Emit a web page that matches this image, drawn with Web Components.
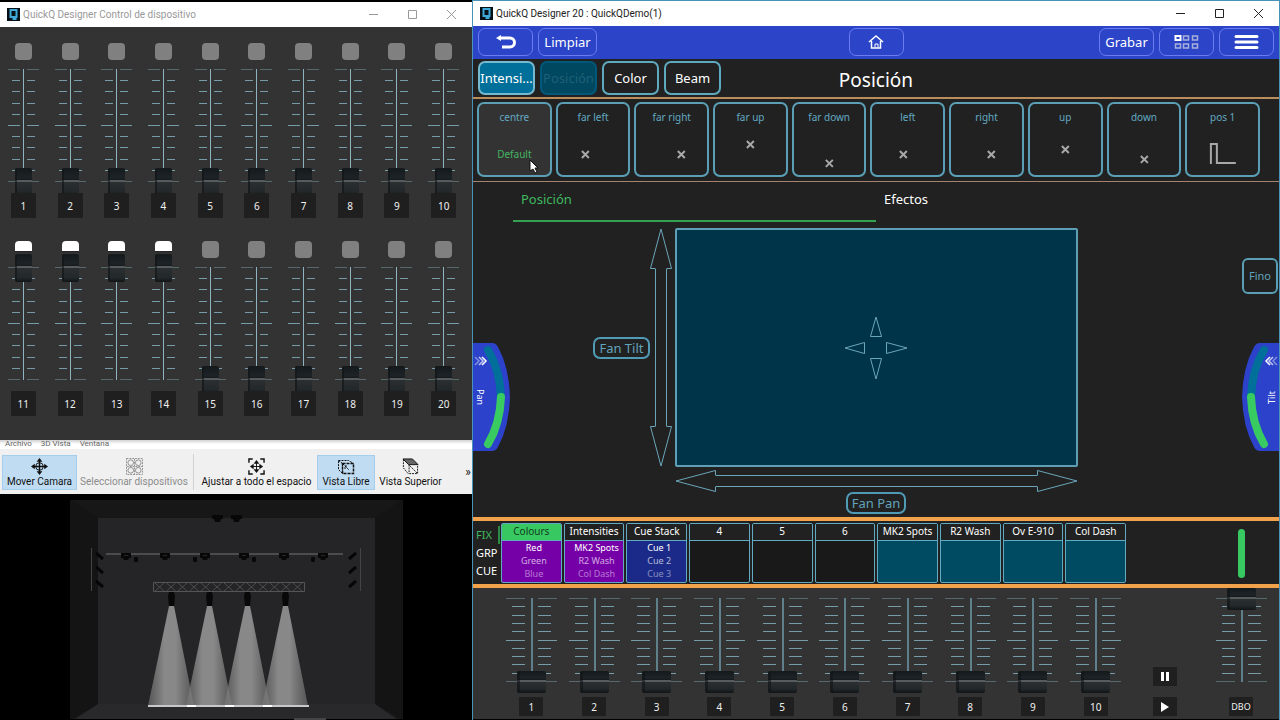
<!DOCTYPE html>
<html lang="es">
<head>
<meta charset="utf-8">
<meta name="viewport" content="width=device-width, initial-scale=1">
<title>QuickQ Designer 20</title>
<style>
  html, body { margin: 0; background: #000; }
  body { font-family: "Noto Sans", "Open Sans", sans-serif; color: #fff; }
</style>
</head>
<body>
<quick-desktop></quick-desktop>

<script>
const BASE = `
  *, *::before, *::after { box-sizing: border-box; }
  button { font: inherit; color: inherit; margin: 0; padding: 0; border: 0; background: none; cursor: pointer; }
  svg { display: block; }
`;

function define(name, render) {
  customElements.define(name, class extends HTMLElement {
    constructor() {
      super();
      this.attachShadow({ mode: "open" });
    }
    connectedCallback() {
      const { css, html } = render(this);
      this.shadowRoot.innerHTML = `<style>${BASE}${css}</style>${html}`;
    }
  });
}

/* Title bar of a desktop window: logo, title text, window buttons */
define("window-title", () => ({
  css: `
    :host { display: flex; align-items: center; height: 25px; padding: 0 1px 0 7px; gap: 3px; background: #fff;
            color: var(--title-color, #222); font: 10px/24px Roboto, sans-serif; flex: none; }
    h1 { flex: 1; margin: 0; font: inherit; white-space: nowrap; }
    .buttons { display: flex; }
    .buttons button { width: 39px; height: 24px; display: grid; place-items: center; }
    .buttons svg { fill: none; stroke: currentColor; }
  `,
  html: `
    <svg width="13" height="13" viewBox="0 0 13 13" aria-hidden="true">
      <rect width="13" height="13" fill="#061018"/>
      <path d="M3.500 2h6v7h-6z M6.500 9v2h3" fill="none" stroke="#3fa9d8" stroke-width="2"/>
    </svg>
    <h1><slot></slot></h1>
    <div class="buttons">
      <button aria-label="Minimizar"><svg width="11" height="11"><path d="M1 5.500h9"/></svg></button>
      <button aria-label="Maximizar"><svg width="11" height="11"><path d="M1.500 1.500h8v8h-8z"/></svg></button>
      <button aria-label="Cerrar"><svg width="11" height="11"><path d="M1 1l9 9M10 1l-9 9"/></svg></button>
    </div>
  `
}));

/* Vertical fader with its scale and number plate */
let faderId = 0;
define("fader-strip", el => {
  const wide = el.hasAttribute("wide");
  const g = wide
    ? { w: 51, h: 84, major: 19, inset: 6, line: 2, tw: 29, th: 22, grip: 10 }
    : { w: 31, h: 113, major: 12, inset: 4, line: 1, tw: 17, th: 28, grip: 13 };
  const ticks = Array.from({ length: 11 }, (_, i) => {
    const y = Math.round(i * (g.h - 1) / 10);
    const main = i % 5 === 0;
    const x = main ? 0 : g.inset;
    const len = g.major - x;
    const fill = i % 10 === 0 ? "#56696f" : "#769ca8";
    return `<path fill="${fill}" d="M${x} ${y}h${len}v1h-${len}z M${g.w - g.major} ${y}h${len}v1h-${len}z"/>`;
  }).join("");
  const id = "f" + (++faderId);
  const led = el.getAttribute("led");
  const label = el.getAttribute("label");
  return {
    css: `
      :host { display: flex; flex-direction: column; align-items: center; }
      .led { width: 17px; height: 17px; border-radius: 4px; background: #808080; margin-bottom: 9px; }
      .led.on { background: linear-gradient(#fff 10px, #222 10px, #333 12px); }
      .track { position: relative; width: ${g.w}px; height: ${g.h}px; }
      .track svg { width: 100%; height: 100%; shape-rendering: crispEdges; }
      input { appearance: none; -webkit-appearance: none; writing-mode: vertical-lr; direction: rtl;
        position: absolute; top: -${g.grip}px; left: 0; right: 0; margin: 0 auto; padding: 0;
        width: ${g.tw}px; height: ${g.h + g.th - 1}px; background: none; }
      input::-webkit-slider-runnable-track { width: ${g.tw}px; height: 100%; background: none; }
      input::-webkit-slider-thumb { appearance: none; -webkit-appearance: none;
        width: ${g.tw}px; height: ${g.th}px; border: 0; border-radius: 2px;
        border-left: ${wide ? 3 : 2}px solid rgba(16,20,22,.6);
        background: linear-gradient(#14191c 0, #1d2327 ${g.grip - 3}px, #14191c ${g.grip - 1}px, #565b5e ${g.grip - 1}px, #565b5e ${g.grip + 1}px, #2b2f32 ${g.grip + 1}px, #22272a ${g.th - 4}px, #101416 100%); }
      label { position: relative; display: grid; place-items: center; background: #1f1f1f; border-radius: 1px;
        width: ${wide ? 24 : 25}px; height: ${wide ? 19 : 25}px; margin-top: ${wide ? 15 : 11}px;
        font-size: ${label.length > 2 ? 9 : 10}px; line-height: 14px; color: #f0f0f0; }
    `,
    html: `
      ${led ? `<button class="led ${led}" aria-label="Flash ${label}"></button>` : ""}
      <div class="track">
        <svg viewBox="0 0 ${g.w} ${g.h}" aria-hidden="true">${ticks}
          <rect x="${(g.w - 1) / 2}" y="0" width="${g.line}" height="${g.h}" fill="${wide ? "#5f7f8a" : "#8fb4bf"}"/></svg>
        <input type="range" id="${id}" min="0" max="100" value="${el.getAttribute("value") || 0}">
      </div>
      <label for="${id}">${label}</label>
    `
  };
});

/* Fixture control surface: two banks of ten faders */
define("device-mixer", () => {
  const strip = n => `<fader-strip label="${n}" led="${n > 10 && n < 15 ? "on" : "off"}" value="${n > 10 && n < 15 ? 100 : 0}"></fader-strip>`;
  const bank = start => `<div class="bank">${Array.from({ length: 10 }, (_, i) => strip(start + i)).join("")}</div>`;
  return {
    css: `
      :host { display: flex; flex-direction: column; gap: 23px; padding: 16px 5px 24px 0; background: #333; }
      .bank { display: grid; grid-template-columns: repeat(10, minmax(0, 1fr)); }
    `,
    html: bank(1) + bank(11)
  };
});

define("viewer-menu", () => ({
  css: `
    :host { display: block; height: 9px; overflow: hidden; background: linear-gradient(#d0d0d0, #fff 4px); }
    nav { display: flex; gap: 9px; padding-left: 5px; font: 8px/8px Roboto, sans-serif; color: #666; }
    button { display: block; height: 8px; }
  `,
  html: `<nav aria-label="Menú"><button>Archivo</button><button>3D Vista</button><button>Ventana</button></nav>`
}));

define("tool-button", () => ({
  css: `
    :host { display: block; flex: none; }
    button { display: flex; flex-direction: column; align-items: center; justify-content: flex-end; width: 100%; height: 35px;
      padding: 0; border: 1px solid transparent; font: 10px/14px Roboto, sans-serif; color: #111; white-space: nowrap; }
    :host([active]) button { background: #bfdcf3; border-color: #a5cdec; }
    :host([disabled]) button { color: #8c8c8c; }
    ::slotted(svg) { display: block; }
  `,
  html: `<button><slot name="icon"></slot><slot></slot></button>`
}));

define("viewer-toolbar", () => ({
  css: `
    :host { display: flex; align-items: center; height: 45px; padding: 1px 0 0 2px; background: #f0f0f0; color: #111; box-sizing: border-box; }
    .move { width: 75px; } .select { width: 114px; } .fit { width: 121px; } .free { width: 58px; } .top { width: 71px; }
    hr { width: 1px; height: 36px; margin: 0 2px; border: 0; background: #d2d2d2; }
    .more { margin-left: auto; width: 8px; font: 12px/16px Roboto, sans-serif; }
    svg { fill: none; stroke: currentColor; }
  `,
  html: `
    <tool-button class="move" active>
      <svg slot="icon" width="17" height="17" viewBox="0 0 18 18">
        <path d="M9 3v12M3 9h12" stroke-width="1.500"/><circle cx="9" cy="9" r="4"/>
        <path d="M9 0l3 4H6zM9 18l3-4H6zM0 9l4-3v6zM18 9l-4-3v6z" fill="currentColor" stroke="none"/></svg>Mover Camara</tool-button>
    <tool-button class="select" disabled>
      <svg slot="icon" width="17" height="17" viewBox="0 0 18 18">
        <path d="M.500.500h17v17H.500zM9 1v16M1 9h16" stroke-dasharray="2 1"/>
        <circle cx="5" cy="5" r="3"/><circle cx="13" cy="5" r="3"/><circle cx="5" cy="13" r="3"/><circle cx="13" cy="13" r="3"/></svg>Seleccionar dispositivos</tool-button>
    <hr>
    <tool-button class="fit">
      <svg slot="icon" width="17" height="17" viewBox="0 0 18 18">
        <path d="M1 5V1h4M13 1h4v4M17 13v4h-4M5 17H1v-4" stroke-width="1.500"/>
        <path d="M9 4v10M4 9h10"/><path d="M9 2l3 4H6zM9 16l3-4H6zM2 9l4-3v6zM16 9l-4-3v6z" fill="currentColor" stroke="none"/></svg>Ajustar a todo el espacio</tool-button>
    <tool-button class="free" active>
      <svg slot="icon" width="18" height="16" viewBox="0 0 18 16">
        <path d="M5.500 4.500h11v10h-11z" stroke-width="1.500" stroke-dasharray="3 1"/>
        <path d="M1.500 1.500l4 3v10l-4-4zM1.500 1.500h10l5 3M6 5l6 6M8 10V7h3" stroke-dasharray="2 1"/></svg>Vista Libre</tool-button>
    <tool-button class="top">
      <svg slot="icon" width="17" height="17" viewBox="0 0 18 18">
        <path d="M1 1h10l6 6H7z" fill="#666"/>
        <path d="M1.500 1.500v9l5 6h10V7M7.500 7v9M8 8l8 8" stroke-dasharray="2 1"/></svg>Vista Superior</tool-button>
    <button class="more" aria-label="Más">»</button>
  `
}));

/* 3D stage preview */
define("stage-view", () => {
  const bars = [126, 165, 205, 244, 284, 323].map(x => `<path d="M${x - 5} 59h10v5h-2l-1 2h-4l-1-2h-2z M${x - 2} 61v1h4v-1z"/>`).join("");
  const pods = [136, 195, 254, 313].map(x => `<rect x="${x - 2}" y="63" width="4" height="5" rx="1"/>`).join("");
  const tops = [217, 236].map(x => `<path d="M${x - 5} 21h11v4h-2l-1 3h-5l-1-3h-2z"/>`).join("");
  const sides = [59, 73, 87].map(y => `<path d="M96 ${y}l7 6M356 ${y}l-7 6" stroke="#060606" stroke-width="3"/>`).join("");
  const heads = [171, 209, 247, 285].map(x => `<path d="M${x - 2} 98h5l1 4-1 10h-5l-1-10z"/>`).join("");
  const beams = [171, 209, 247, 285].map(x => `<path d="M${x - 2} 112h5l20 100h-46z" fill="url(#beam)"/>`).join("");
  const lattice = Array.from({ length: 13 }, (_, i) => `M${155 + i * 11.5} 89l9 8M${164 + i * 11.5} 89l-9 8`).join("");
  return {
    css: `:host { display: block; background: #000; overflow: hidden; } svg { width: 100%; height: 226px; }`,
    html: `
      <svg viewBox="0 0 472 226" preserveAspectRatio="xMidYMin slice" role="img" aria-label="Escenario">
        <defs><linearGradient id="beam">
          <stop offset="0" stop-color="#777" stop-opacity=".6"/><stop offset=".35" stop-color="#9a9a9a" stop-opacity=".85"/>
          <stop offset=".6" stop-color="#9a9a9a" stop-opacity=".85"/><stop offset="1" stop-color="#777" stop-opacity=".6"/>
        </linearGradient></defs>
        <path fill="#171717" d="M70 6h333v219H70z"/>
        <path fill="#141414" d="M70 6l28 18v186l-28 15zM403 6l-28 18v186l28 15z"/>
        <path fill="#252527" d="M98 24h277v186H98z"/>
        <path fill="#29292b" d="M98 210h277l22 15H75z"/>
        <path d="M91.500 54v43M360.500 54v43" stroke="#444"/>
        <path d="M106 60h237" stroke="#4c4c4c" stroke-width="2"/>
        <g fill="#080808">${tops}${bars}${pods}${heads}</g>${sides}
        <path d="${lattice}" stroke="#555" stroke-width=".8"/>
        <path d="M153.500 88.500h151v9h-151z" fill="none" stroke="#555"/>
        ${beams}
        <path d="M148 212h161" stroke="#c8c8c8" stroke-width="2"/>
        <path d="M187 212h9M225 212h9M263 212h9" stroke="#fff" stroke-width="2"/>
        <path d="M294 225h32" stroke="#444" stroke-width="2"/>
      </svg>`
  };
});

/* Blue toolbar button and outlined page button */
define("console-button", () => ({
  css: `
    :host { display: block; flex: none; }
    button { display: grid; place-items: center; width: 100%; height: 28px; border: 1px solid #6a7cf2; border-radius: 7px;
      font-size: 13px; line-height: 18px; color: #fff; white-space: nowrap; overflow: hidden; }
    :host([page]) button { height: 34px; border: 2px solid #5fa9bf; border-radius: 7px; background: #212121; }
    :host([page][on]) button { background: #00709a; border-color: #74b9cf; }
    :host([page][current]) button { background: #00485f; border-color: #00587a; color: #1f6078; }
  `,
  html: `<button><slot></slot></button>`
}));

define("console-toolbar", () => ({
  css: `
    :host { display: grid; grid-template-columns: 1fr auto 1fr; align-items: center; height: 33px; box-sizing: border-box; padding: 0 5px 2px; background: #2b44c8; }
    div { display: flex; gap: 5px; }
    .end { justify-content: flex-end; }
    console-button { width: 55px; }
    .clear { width: 59px; }
    svg { fill: none; stroke: #fff; }
  `,
  html: `
    <div>
      <console-button><svg width="20" height="14" viewBox="0 0 20 14" role="img" aria-label="Atrás"><path d="M3 3h11a4 4 0 0 1 0 9H6" stroke-width="3"/><path d="M0 3l5-3v6z" fill="#fff" stroke="none"/></svg></console-button>
      <console-button class="clear">Limpiar</console-button>
    </div>
    <console-button><svg width="16" height="14" viewBox="0 0 16 14" role="img" aria-label="Inicio"><path d="M1 7l7-6 7 6M3.500 6v7h9V6" stroke-width="1.500"/><path d="M7 12.500V9h3v3.500"/></svg></console-button>
    <div class="end">
      <console-button>Grabar</console-button>
      <console-button><svg width="25" height="14" viewBox="0 0 25 14" role="img" aria-label="Vistas"><path d="M9.500 1h5v4h-5zM18.500 1h5v4h-5zM1.500 9h5v4h-5zM9.500 9h5v4h-5zM18.500 9h5v4h-5z" stroke="#a9b0d8" stroke-width="1.500"/><path d="M1.500 1h5v4h-5z" stroke-width="2"/></svg></console-button>
      <console-button><svg width="25" height="14" viewBox="0 0 25 14" role="img" aria-label="Menú"><path d="M2 1.500h21M2 7h21M2 12.500h21" stroke-width="3" stroke-linecap="round"/></svg></console-button>
    </div>
  `
}));

define("page-header", () => ({
  css: `
    :host { display: grid; grid-template-columns: 1fr auto 1fr; align-items: center; height: 40px; padding: 0 5px; box-sizing: border-box;
      background: #212121; border-bottom: 2px solid #b98d5c; }
    nav { display: flex; gap: 5px; }
    console-button { width: 57px; }
    h2 { margin: 0; font-size: 19px; line-height: 26px; font-weight: 400; padding-top: 3px; }
  `,
  html: `
    <nav aria-label="Parámetros">
      <console-button page on>Intensi...</console-button>
      <console-button page current>Posición</console-button>
      <console-button page>Color</console-button>
      <console-button page>Beam</console-button>
    </nav>
    <h2>Posición</h2>
  `
}));

/* Position preset: name, plus a mark drawn at the preset's place on the pad */
define("preset-card", el => {
  const at = el.getAttribute("at");
  let mark = "";
  if (at) {
    const [x, y] = at.split(",").map(Number);
    mark = `<path d="M${x - 3} ${y - 3}l7 7M${x + 4} ${y - 3}l-7 7"/>`;
  } else if (el.hasAttribute("step")) {
    mark = `<path d="M26 62V42h6v19h19"/>`;
  }
  const note = el.getAttribute("note");
  return {
    css: `
      :host { display: block; min-width: 0; }
      button { position: relative; display: flex; flex-direction: column; align-items: center; gap: 22px; width: 100%; height: 75px;
        padding-top: 6px; border: 2px solid #5a9fb5; border-radius: 7px; background: #212121; color: #62a9c2;
        font-size: 10px; line-height: 15px; white-space: nowrap; }
      :host([active]) button { background: #333; }
      .note { color: #44b562; }
      svg { position: absolute; top: -2px; left: -2px; width: calc(100% + 4px); height: 75px; fill: none; stroke: #a8a8a8; stroke-width: 2; }
      ::slotted(svg) { position: absolute; top: 55px; left: 50px; }
    `,
    html: `<button><span>${el.getAttribute("name")}</span>${note ? `<span class="note">${note}</span>` : `<svg viewBox="0 0 75 75" aria-hidden="true">${mark}</svg>`}<slot></slot></button>`
  };
});

define("preset-row", () => ({
  css: `
    :host { display: grid; grid-template-columns: repeat(10, minmax(0, 1fr)); gap: 4px; padding: 3px 19px 4px 4px;
      background: #212121; border-bottom: 1px solid #a5836c; }
  `,
  html: `
    <preset-card name="centre" note="Default" active>
      <svg width="10" height="15" viewBox="0 0 10 15" aria-hidden="true"><path d="M1 1v11l3-2 2 4 2-1-2-4h3z" fill="#fff" stroke="#111"/></svg>
    </preset-card>
    <preset-card name="far left" at="29,52"></preset-card>
    <preset-card name="far right" at="47,52"></preset-card>
    <preset-card name="far up" at="37,42"></preset-card>
    <preset-card name="far down" at="37,61"></preset-card>
    <preset-card name="left" at="33,52"></preset-card>
    <preset-card name="right" at="42,52"></preset-card>
    <preset-card name="up" at="37,47"></preset-card>
    <preset-card name="down" at="37,57"></preset-card>
    <preset-card name="pos 1" step></preset-card>
  `
}));

/* Curved encoder wheel on the window's edge */
define("encoder-wheel", el => {
  const right = el.hasAttribute("right");
  return {
    css: `
      :host { display: block; width: 37px; ${right ? "margin-left: auto;" : ""} }
      button { position: relative; display: grid; place-items: center start; width: 37px; height: 108px; padding-left: ${right ? 24 : 1}px; }
      svg { position: absolute; inset: 0; ${right ? "transform: scaleX(-1);" : ""} }
      span { position: relative; writing-mode: vertical-rl; font-size: 9px; line-height: 12px; color: #fff; ${right ? "transform: rotate(180deg);" : ""} }
    `,
    html: `<button>
      <svg width="37" height="108" viewBox="0 0 37 108" aria-hidden="true">
        <path d="M0 0h19q4 0 6 4 11 20 12 50-1 30-12 50-2 4-6 4H0z" fill="#2c42cb"/>
        <path d="M15 7q12 20 13 47" fill="none" stroke="#00709a" stroke-width="8" stroke-linecap="round"/>
        <path d="M28 54q-1 27-13 47" fill="none" stroke="#38cb62" stroke-width="8" stroke-linecap="round"/>
        <g fill="none" stroke="#fff" stroke-width="1.500"><path d="M9 14l4 4-4 4"/><path d="M6 14l4 4-4 4" opacity=".7"/><path d="M2 14l4 4-4 4" opacity=".4"/></g>
      </svg>
      <span><slot></slot></span></button>`
  };
});

/* Double-headed outline arrow; the shaft fills whatever length is left */
define("fan-arrow", el => {
  const v = el.hasAttribute("vertical");
  const head = flip => v
    ? `<svg width="22" height="41" viewBox="0 0 22 41"><path d="${flip ? "M5.500.500H.500L11 40 21.500.500h-5" : "M5.500 40.500H.500L11 1 21.500 40.500h-5"}"/></svg>`
    : `<svg width="41" height="22" viewBox="0 0 41 22"><path d="${flip ? "M.500 5.500V.500L40 11 .500 21.500v-5" : "M40.500 5.500V.500L1 11 40.500 21.500v-5"}"/></svg>`;
  return {
    css: `
      :host { display: flex; flex-direction: ${v ? "column" : "row"}; align-items: center; }
      svg { flex: none; fill: none; stroke: #6aa6ba; }
      i { flex: 1; ${v ? "width: 12px; border-width: 0 1px;" : "height: 12px; border-width: 1px 0;"} border-style: solid; border-color: #6aa6ba; }
    `,
    html: head(false) + "<i></i>" + head(true)
  };
});

define("fan-button", () => ({
  css: `
    :host { display: block; flex: none; }
    button { display: block; height: 22px; padding: 0 4px; border: 2px solid #4f9ab4; border-radius: 7px; background: #212121; color: #62a3bb;
      font-size: 13px; line-height: 18px; white-space: nowrap; }
  `,
  html: `<button><slot></slot></button>`
}));

define("position-editor", () => ({
  css: `
    :host { display: grid; grid-template-columns: 40px minmax(0, 1fr) 40px; min-height: 335px; background: #212121; flex: 1; }
    .side { display: flex; flex-direction: column; }
    .left { padding-top: 161px; }
    .right { padding-top: 76px; gap: 49px; }
    .fine { width: 36px; height: 36px; margin-left: 3px; border: 2px solid #5a9fb5; border-radius: 6px; color: #62a3bb; font-size: 11px; line-height: 16px; }
    .tabs { display: grid; grid-template-columns: 1fr 1fr; height: 40px; }
    .tabs button { padding: 0 8px 5px; text-align: left; font-size: 13px; line-height: 18px; border-bottom: 2px solid transparent; }
    .tabs [aria-selected=true] { color: #3fb95f; border-bottom-color: #36a052; }
    .pad-grid { display: grid; grid-template-columns: 1fr 403px 1fr; grid-template-rows: 239px 22px 22px; column-gap: 3px; row-gap: 0; padding-top: 6px; }
    .tilt { display: flex; justify-content: flex-end; align-items: center; }
    .tilt fan-arrow { height: 100%; }
    .pad { display: grid; place-items: center; grid-column: 2; background: #003549; border: 2px solid #5f9fb5; border-radius: 2px; }
    .pad svg { fill: none; stroke: #6aa6ba; }
    .pan { grid-column: 2; margin-top: 3px; height: 22px; }
    .pan-button { grid-column: 2; justify-self: center; margin-top: 3px; }
  `,
  html: `
    <div class="side left"><encoder-wheel>Pan</encoder-wheel></div>
    <div>
      <div class="tabs" role="tablist">
        <button role="tab" aria-selected="true">Posición</button>
        <button role="tab" aria-selected="false">Efectos</button>
      </div>
      <div class="pad-grid">
        <div class="tilt"><fan-button>Fan Tilt</fan-button><fan-arrow vertical></fan-arrow></div>
        <div class="pad">
          <svg width="64" height="64" viewBox="0 0 64 64" role="img" aria-label="Pan y Tilt">
            <path d="M32 1l5.500 19.500h-11zM32 63l5.500-20.500h-11zM1 32l19.500-5.500v11zM63 32l-20.500-5.500v11z"/>
          </svg>
        </div>
        <fan-arrow class="pan"></fan-arrow>
        <fan-button class="pan-button">Fan Pan</fan-button>
      </div>
    </div>
    <div class="side right"><button class="fine">Fino</button><encoder-wheel right>Tilt</encoder-wheel></div>
  `
}));

/* Playback slot: title and up to three cue lines */
define("cue-slot", el => ({
  css: `
    :host { display: block; min-width: 0; }
    button { display: flex; flex-direction: column; width: 100%; height: 60px; border: 1px solid #62aac2; border-radius: 2px; overflow: hidden;
      background: ${el.getAttribute("fill") || "#191919"}; }
    .head { width: 100%; height: 17px; flex: none; background: #212121; border-bottom: 1px solid #62aac2; font-size: 10px; line-height: 15px; white-space: nowrap; }
    :host([on]) .head { background: #38c862; color: #10401f; }
    .lines { width: 100%; padding-left: 5px; font-size: 9px; line-height: 13px; white-space: nowrap; }
    .lines span { display: block; }
    .lines span:nth-child(2) { opacity: .65; }
    .lines span:nth-child(3) { opacity: .45; }
  `,
  html: `<button><span class="head">${el.getAttribute("name")}</span><span class="lines">${
    (el.getAttribute("lines") || "").split("|").filter(Boolean).map(t => `<span>${t}</span>`).join("")}</span></button>`
}));

define("playback-section", () => ({
  css: `
    :host { display: block; }
    .row { display: grid; grid-template-columns: 27px minmax(0, 627fr) minmax(0, 152fr); }
    .cues { height: 71px; border: solid #f3a24c; border-width: 4px 0; background: #212121; padding-top: 2px; }
    .modes { display: flex; flex-direction: column; padding-top: 3px; font-size: 11px; line-height: 18px; }
    .modes button { height: 18px; text-align: left; padding-left: 3px; }
    .modes .on { color: #3fb95f; border-right: 2px solid #2d8a45; }
    .ten { display: grid; grid-template-columns: repeat(10, minmax(0, 1fr)); }
    .ten cue-slot { margin-left: 1px; margin-right: 1px; }
    .end { display: grid; grid-template-columns: 1fr 1fr; }
    .level { grid-column: 2; justify-self: center; width: 7px; height: 49px; margin-top: 6px; border-radius: 4px; background: #38c862; }
    .faders { height: 131px; padding-top: 10px; background: #333; }
    .transport { display: flex; flex-direction: column; align-items: center; gap: 11px; padding-top: 69px; }
    .transport button { display: grid; place-items: center; width: 24px; height: 19px; background: #1f1f1f; }
  `,
  html: `
    <div class="row cues">
      <div class="modes"><button class="on">FIX</button><button>GRP</button><button>CUE</button></div>
      <div class="ten">
        <cue-slot on name="Colours" fill="#7600a8" lines="Red|Green|Blue"></cue-slot>
        <cue-slot name="Intensities" fill="#7600a8" lines="MK2 Spots|R2 Wash|Col Dash"></cue-slot>
        <cue-slot name="Cue Stack" fill="#1b2a88" lines="Cue 1|Cue 2|Cue 3"></cue-slot>
        <cue-slot name="4"></cue-slot>
        <cue-slot name="5"></cue-slot>
        <cue-slot name="6"></cue-slot>
        <cue-slot name="MK2 Spots" fill="#004a62"></cue-slot>
        <cue-slot name="R2 Wash" fill="#004a62"></cue-slot>
        <cue-slot name="Ov E-910" fill="#004a62"></cue-slot>
        <cue-slot name="Col Dash" fill="#004a62"></cue-slot>
      </div>
      <div class="end"><div class="level" role="img" aria-label="Nivel general"></div></div>
    </div>
    <div class="row faders">
      <span></span>
      <div class="ten">${Array.from({ length: 10 }, (_, i) => `<fader-strip wide label="${i + 1}" value="0"></fader-strip>`).join("")}</div>
      <div class="end">
        <div class="transport">
          <button aria-label="Pausa"><svg width="10" height="10"><path d="M1 0h3v9H1zM6 0h3v9H6z" fill="#fff"/></svg></button>
          <button aria-label="Reproducir"><svg width="10" height="10"><path d="M1 0l8 5-8 5z" fill="#fff"/></svg></button>
        </div>
        <fader-strip wide label="DBO" value="100"></fader-strip>
      </div>
    </div>
  `
}));

define("quick-desktop", () => ({
  css: `
    :host { display: grid; grid-template-columns: minmax(0, 472fr) minmax(0, 808fr); min-height: 100vh; background: #000; }
    section { display: flex; flex-direction: column; min-width: 0; }
    .device { padding-top: 2px; }
    .device window-title { --title-color: #999; }
    .console { border: solid #4a93b8; border-width: 1px 1px 0; padding-bottom: 1px; }
  `,
  html: `
    <section class="device">
      <window-title>QuickQ Designer Control de dispositivo</window-title>
      <device-mixer></device-mixer>
      <viewer-menu></viewer-menu>
      <viewer-toolbar></viewer-toolbar>
      <stage-view></stage-view>
    </section>
    <section class="console">
      <window-title>QuickQ Designer 20 : QuickQDemo(1)</window-title>
      <console-toolbar></console-toolbar>
      <page-header></page-header>
      <preset-row></preset-row>
      <position-editor></position-editor>
      <playback-section></playback-section>
    </section>
  `
}));
</script>
</body>
</html>
